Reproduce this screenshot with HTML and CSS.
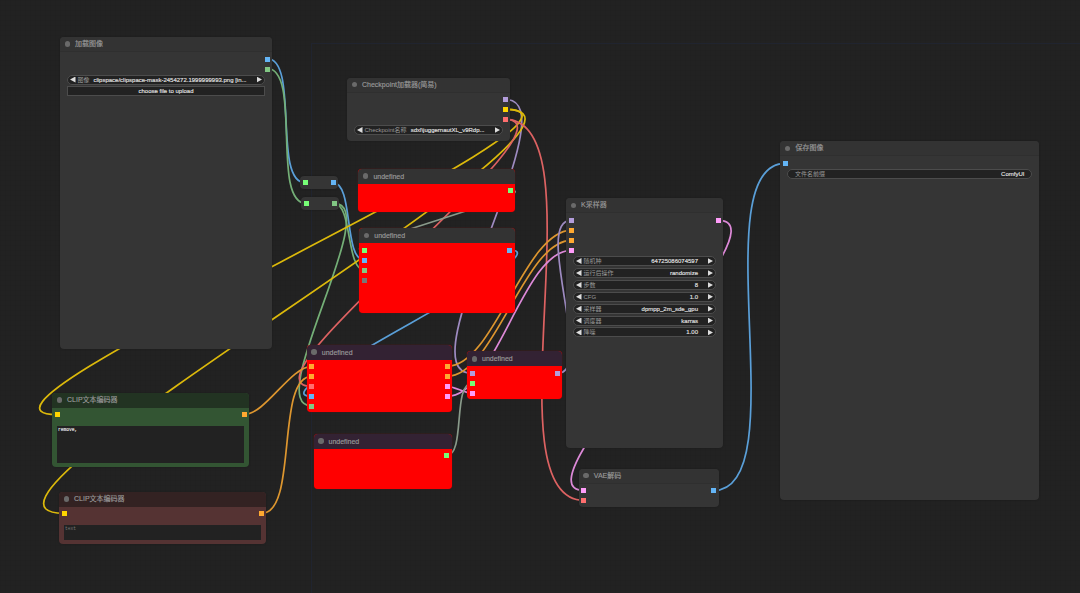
FILE: index.html
```
<!DOCTYPE html>
<html lang="zh-CN">
    <head>
        <meta charset="UTF-8" />
        <meta name="viewport" content="width=device-width, initial-scale=1.0" />
        <title>ComfyUI</title>
        <link rel="stylesheet" href="styles.css">
    </head>
    <body>
        <div class="canvas">
            <div class="group"></div>
            <svg class="links" id="links" width="1080" height="593"></svg>

            <div class="node load-image">
                <div class="title">加载图像</div>
                <div class="body">
                    <div class="slots"><div class="outputs"><i class="blue"></i><i class="mask"></i></div></div>
                    <div class="widgets">
                        <div class="widget combo"><span>图像</span><b>clipspace/clipspace-mask-2454272.1999999993.png [in...</b></div>
                        <div class="widget upload">choose file to upload</div>
                    </div>
                </div>
            </div>

            <div class="node checkpoint">
                <div class="title">Checkpoint加载器(简易)</div>
                <div class="body">
                    <div class="slots"><div class="outputs"><i class="vector"></i><i class="yellow"></i><i class="red"></i></div></div>
                    <div class="widgets">
                        <div class="widget combo"><span>Checkpoint名称</span><b>sdxl\juggernautXL_v9Rdp...</b></div>
                    </div>
                </div>
            </div>

            <div class="node reroute reroute-image"><i class="any"></i><i class="blue"></i></div>
            <div class="node reroute reroute-mask"><i class="any"></i><i class="mask"></i></div>

            <div class="node missing missing-a">
                <div class="title">undefined</div>
                <div class="body"><div class="slots"><div class="outputs"><i class="any"></i></div></div></div>
            </div>

            <div class="node missing missing-b">
                <div class="title">undefined</div>
                <div class="body">
                    <div class="slots">
                        <div class="inputs"><i class="any"></i><i class="blue"></i><i class="mask"></i><i class="gray"></i></div>
                        <div class="outputs"><i class="blue"></i></div>
                    </div>
                </div>
            </div>

            <div class="node missing purple missing-c">
                <div class="title">undefined</div>
                <div class="body">
                    <div class="slots">
                        <div class="inputs"><i class="orange"></i><i class="orange"></i><i class="red"></i><i class="blue"></i><i class="mask"></i></div>
                        <div class="outputs"><i class="orange"></i><i class="orange"></i><i class="pink"></i><i class="pink"></i></div>
                    </div>
                </div>
            </div>

            <div class="node missing purple missing-d">
                <div class="title">undefined</div>
                <div class="body">
                    <div class="slots">
                        <div class="inputs"><i class="vector"></i><i class="any"></i><i class="pink"></i></div>
                        <div class="outputs"><i class="vector"></i></div>
                    </div>
                </div>
            </div>

            <div class="node missing purple missing-e">
                <div class="title">undefined</div>
                <div class="body"><div class="slots"><div class="outputs"><i class="any"></i></div></div></div>
            </div>

            <div class="node sampler">
                <div class="title">K采样器</div>
                <div class="body">
                    <div class="slots">
                        <div class="inputs"><i class="vector"></i><i class="orange"></i><i class="orange"></i><i class="pink"></i></div>
                        <div class="outputs"><i class="pink"></i></div>
                    </div>
                    <div class="widgets">
                        <div class="widget combo"><span>随机种</span><b>64725086074597</b></div>
                        <div class="widget combo"><span>运行后操作</span><b>randomize</b></div>
                        <div class="widget combo"><span>步数</span><b>8</b></div>
                        <div class="widget combo"><span>CFG</span><b>1.0</b></div>
                        <div class="widget combo"><span>采样器</span><b>dpmpp_2m_sde_gpu</b></div>
                        <div class="widget combo"><span>调度器</span><b>karras</b></div>
                        <div class="widget combo"><span>降噪</span><b>1.00</b></div>
                    </div>
                </div>
            </div>

            <div class="node vae">
                <div class="title">VAE解码</div>
                <div class="body">
                    <div class="slots">
                        <div class="inputs"><i class="pink"></i><i class="red"></i></div>
                        <div class="outputs"><i class="blue"></i></div>
                    </div>
                </div>
            </div>

            <div class="node save-image">
                <div class="title">保存图像</div>
                <div class="body">
                    <div class="slots"><div class="inputs"><i class="blue"></i></div></div>
                    <div class="widgets">
                        <div class="widget"><span>文件名前缀</span><b>ComfyUI</b></div>
                    </div>
                </div>
            </div>

            <div class="node clip positive">
                <div class="title">CLIP文本编码器</div>
                <div class="body">
                    <div class="slots">
                        <div class="inputs"><i class="yellow"></i></div>
                        <div class="outputs"><i class="orange"></i></div>
                    </div>
                    <div class="prompt">remove,</div>
                </div>
            </div>

            <div class="node clip negative">
                <div class="title">CLIP文本编码器</div>
                <div class="body">
                    <div class="slots">
                        <div class="inputs"><i class="yellow"></i></div>
                        <div class="outputs"><i class="orange"></i></div>
                    </div>
                    <div class="prompt placeholder">text</div>
                </div>
            </div>
        </div>

        <script src="links.js"></script>
    </body>
</html>
```
FILE: styles.css
```
body {
    margin: 0;
    background: #212121;
    font-family: "Liberation Sans", Arial, "Noto Sans CJK SC", sans-serif;
    overflow: hidden;
}
.canvas {
    position: relative;
    width: 1080px;
    height: 593px;
    overflow: hidden;
    background-color: #222;
    background-image:
        linear-gradient(to right, rgba(0, 0, 0, 0.025) 1px, transparent 1px),
        linear-gradient(to bottom, rgba(0, 0, 0, 0.025) 1px, transparent 1px);
    background-size: 5px 5px;
}
.links {
    position: absolute;
    left: 0;
    top: 0;
}
.links path {
    fill: none;
    stroke-width: 1.7;
}
.group {
    position: absolute;
    left: 311px;
    top: 43px;
    width: 800px;
    height: 600px;
    border: 1px solid #20242f;
}

/* nodes */
.node {
    position: absolute;
    box-sizing: border-box;
    display: flex;
    flex-direction: column;
    background: #353535;
    border-radius: 4px;
    box-shadow: 0 0 2px rgba(0, 0, 0, 0.25);
    overflow: hidden;
}
.title {
    display: flex;
    align-items: center;
    flex: none;
    box-sizing: border-box;
    height: 15px;
    padding-left: 4.5px;
    background: #333;
    border-bottom: 1px solid #2f2f2f;
    color: #999;
    font-size: 7px;
    line-height: 14px;
    white-space: nowrap;
    -webkit-text-stroke: 0.15px #999;
}
.title::before {
    content: "";
    width: 5.5px;
    height: 5.5px;
    margin-right: 5px;
    border-radius: 50%;
    background: #6a6a6a;
}
.body {
    flex: 1;
    display: flex;
    flex-direction: column;
}
.slots {
    display: flex;
    justify-content: space-between;
    padding: 4.5px 2.5px 0;
}
.inputs,
.outputs {
    display: flex;
    flex-direction: column;
    gap: 5px;
}
.outputs {
    margin-left: auto;
}
i {
    display: block;
    width: 5px;
    height: 5px;
    background: #7f7;
}
.blue { background: #64b5f6; }
.mask { background: #81c784; }
.vector { background: #b39ddb; }
.yellow { background: #ffd500; }
.red { background: #ff6e6e; }
.orange { background: #ffa931; }
.pink { background: #ff9cf9; }
.gray { background: #777; }

/* widgets */
.widgets {
    display: flex;
    flex-direction: column;
    gap: 1.9px;
    padding: 0 7px;
}
.widget {
    box-sizing: border-box;
    height: 10px;
    display: flex;
    align-items: center;
    justify-content: space-between;
    padding: 0 6.5px;
    border: 1px solid #4c4c4c;
    border-radius: 5px;
    background: #222;
    color: #999;
    font-size: 6px;
    line-height: 8px;
    white-space: nowrap;
}
.widget b {
    font-weight: normal;
    color: #ddd;
    -webkit-text-stroke: 0.2px #ddd;
}
.combo {
    padding: 0 2px;
}
.combo::before,
.combo::after {
    content: "";
    width: 5.5px;
    height: 6px;
    background: #ddd;
}
.combo::before {
    margin-right: 2px;
    clip-path: polygon(0 50%, 100% 0, 100% 100%);
}
.combo::after {
    clip-path: polygon(0 0, 100% 50%, 0 100%);
}
.combo b {
    margin-left: auto;
    margin-right: 9.5px;
}
.upload {
    justify-content: center;
    border-radius: 0;
    color: #ddd;
    -webkit-text-stroke: 0.2px #ddd;
}

/* placement on the graph */
.load-image { left: 60px; top: 37px; width: 212px; height: 312px; }
.load-image .widgets { padding-top: 3px; }
.load-image .combo b { margin-right: 10px; }
.checkpoint { left: 347px; top: 77.5px; width: 163px; height: 63px; }
.checkpoint .widgets { padding-top: 3px; }
.checkpoint .combo b { margin-right: 10px; }
.missing-a { left: 358.4px; top: 168.5px; width: 157px; height: 43.5px; }
.missing-b { left: 359.3px; top: 228px; width: 155.3px; height: 85.4px; }
.missing-c { left: 306.8px; top: 344.5px; width: 145.5px; height: 67.3px; }
.missing-d { left: 467px; top: 351.4px; width: 95.4px; height: 48px; }
.missing-e { left: 313.5px; top: 433.7px; width: 138px; height: 55.5px; }
.sampler { left: 566px; top: 198.3px; width: 157px; height: 250px; }
.sampler .widgets { padding-top: 3.3px; }
.vae { left: 578.8px; top: 468.7px; width: 140px; height: 38px; }
.save-image { left: 780.4px; top: 141.3px; width: 258.5px; height: 359px; }
.save-image .widgets { padding-top: 3.3px; }
.positive { left: 52px; top: 392.6px; width: 197.4px; height: 74.8px; }
.negative { left: 59px; top: 491.7px; width: 207.4px; height: 52px; }

.missing {
    background: #f00;
    box-shadow: 0 0 1px #a00;
}
.missing .title {
    border-bottom: 0;
    line-height: 15px;
}
.purple .title {
    background: #323;
}

.reroute {
    width: 38px;
    height: 13px;
    padding: 0 2.5px;
    flex-direction: row;
    align-items: center;
    justify-content: space-between;
}
.reroute-image { left: 300.3px; top: 176.2px; }
.reroute-mask { left: 301px; top: 196.8px; }

.clip .body {
    padding: 0 0 4px;
}
.clip .title {
    border-bottom: 0;
}
.positive { background: #353; }
.positive .title { background: #232; }
.negative { background: #533; }
.negative .title { background: #322; }
.prompt {
    flex: 1;
    margin: 8.5px 5px 0;
    padding: 1.5px 1px;
    background: #222;
    color: #ddd;
    font-family: "Liberation Mono", monospace;
    font-size: 4.6px;
    line-height: 5px;
    -webkit-text-stroke: 0.2px #ddd;
}
.placeholder {
    color: #777;
    -webkit-text-stroke: 0;
}
```
FILE: links.js
```
const colors = {
    image: "#5a9fd8",
    mask: "#74af77",
    model: "#9e8bc1",
    clip: "#dcb90b",
    vae: "#dd6262",
    cond: "#dd962f",
    latent: "#dd89d8",
    any: "#899a8a",
};

// [x1, y1, x2, y2, type]
const links = [
    [267, 58.5, 305, 182.7, "image"],
    [267, 68.5, 306, 203.3, "mask"],
    [333, 182.7, 364.3, 260, "image"],
    [334, 203.3, 364.3, 270, "mask"],
    [334, 203.3, 311.7, 406, "mask"],
    [505, 99.3, 471.7, 373.3, "model"],
    [505, 109.3, 56.7, 414.5, "clip"],
    [505, 109.3, 63.7, 513.3, "clip"],
    [505, 119.3, 311.7, 386.3, "vae"],
    [505, 119.3, 584, 500.5, "vae"],
    [510.5, 190.5, 364.3, 250, "any"],
    [509.5, 250, 311.7, 396.3, "image"],
    [244.3, 414.5, 311.7, 366.3, "cond"],
    [261.8, 513.3, 311.7, 376.3, "cond"],
    [447.5, 366.3, 571, 230.3, "cond"],
    [447.5, 376.3, 571, 240.3, "cond"],
    [447.5, 386.3, 471.7, 393.3, "latent"],
    [447.5, 396.3, 571, 250.3, "latent"],
    [557.5, 373.3, 571, 220.3, "model"],
    [446.5, 455.7, 471.7, 383.3, "any"],
    [718.3, 220.3, 584, 490.5, "latent"],
    [713.7, 490.5, 785.3, 163.3, "image"],
];

const svg = document.getElementById("links");
links.forEach(([x1, y1, x2, y2, type]) => {
    // the curve bends out by a quarter of the distance
    const d = Math.hypot(x2 - x1, y2 - y1) * 0.25;
    const path = document.createElementNS("http://www.w3.org/2000/svg", "path");
    path.setAttribute("d", `M${x1} ${y1} C${x1 + d} ${y1} ${x2 - d} ${y2} ${x2} ${y2}`);
    path.setAttribute("stroke", colors[type]);
    svg.appendChild(path);
});
```
